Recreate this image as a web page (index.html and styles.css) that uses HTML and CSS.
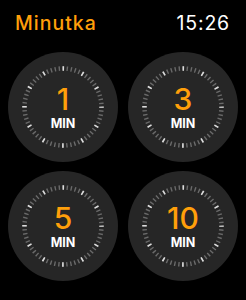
FILE: index.html
```html
<!DOCTYPE html>
<html>
<head>
<meta charset="utf-8">
<link rel="stylesheet" href="styles.css">
</head>
<body>
<header class="bar">
  <span class="title">Minutka</span>
  <span class="clock">15:26</span>
</header>
<main class="grid">
  <div class="dial">
    <svg class="face" viewBox="0 0 110 110"><circle cx="55" cy="55" r="55" fill="#262626"/><circle class="minor" cx="55" cy="55" r="38.5"/><circle class="major" cx="55" cy="55" r="38.5"/></svg>
    <span class="num">1</span><span class="unit">MIN</span>
  </div>
  <div class="dial">
    <svg class="face" viewBox="0 0 110 110"><circle cx="55" cy="55" r="55" fill="#262626"/><circle class="minor" cx="55" cy="55" r="38.5"/><circle class="major" cx="55" cy="55" r="38.5"/></svg>
    <span class="num">3</span><span class="unit">MIN</span>
  </div>
  <div class="dial">
    <svg class="face" viewBox="0 0 110 110"><circle cx="55" cy="55" r="55" fill="#262626"/><circle class="minor" cx="55" cy="55" r="38.5"/><circle class="major" cx="55" cy="55" r="38.5"/></svg>
    <span class="num">5</span><span class="unit">MIN</span>
  </div>
  <div class="dial">
    <svg class="face" viewBox="0 0 110 110"><circle cx="55" cy="55" r="55" fill="#262626"/><circle class="minor" cx="55" cy="55" r="38.5"/><circle class="major" cx="55" cy="55" r="38.5"/></svg>
    <span class="num">10</span><span class="unit">MIN</span>
  </div>
</main>
</body>
</html>
```
FILE: styles.css
```css
html, body {
  margin: 0;
  padding: 0;
  background: #000;
  width: 246px;
  height: 300px;
  overflow: hidden;
  font-family: Inter, "Noto Sans", sans-serif;
}
.bar {
  display: flex;
  justify-content: space-between;
  align-items: baseline;
  padding: 11px 16px 0 15px;
  height: 44px;
  box-sizing: border-box;
}
.title {
  color: #ff9f0a;
  font-size: 19.5px;
  font-weight: 500;
  letter-spacing: 1px;
}
.clock {
  color: #fff;
  font-size: 19.5px;
  font-weight: 400;
  letter-spacing: 0.8px;
}
.grid {
  display: grid;
  grid-template-columns: 110px 110px;
  column-gap: 10px;
  row-gap: 9px;
  padding: 8px 8px 0 8px;
}
.dial {
  position: relative;
  width: 110px;
  height: 110px;
  display: flex;
  flex-direction: column;
  align-items: center;
  justify-content: center;
}
.face {
  position: absolute;
  left: 0;
  top: 0;
  width: 110px;
  height: 110px;
}
.minor {
  fill: none;
  stroke: #6a6a6a;
  stroke-width: 4.5;
  stroke-dasharray: 1.4 2.632;
  stroke-dashoffset: 0.7;
}
.major {
  fill: none;
  stroke: #dcdcdc;
  stroke-width: 4.5;
  stroke-dasharray: 1.6 18.56;
  stroke-dashoffset: 0.8;
}
.num {
  position: relative;
  color: #ff9f0a;
  font-size: 30px;
  font-weight: 500;
  line-height: 34px;
  margin-top: -2px;
}
.unit {
  position: relative;
  color: #fff;
  font-size: 12.5px;
  font-weight: 700;
  line-height: 14px;
  margin-top: 1px;
}
```
